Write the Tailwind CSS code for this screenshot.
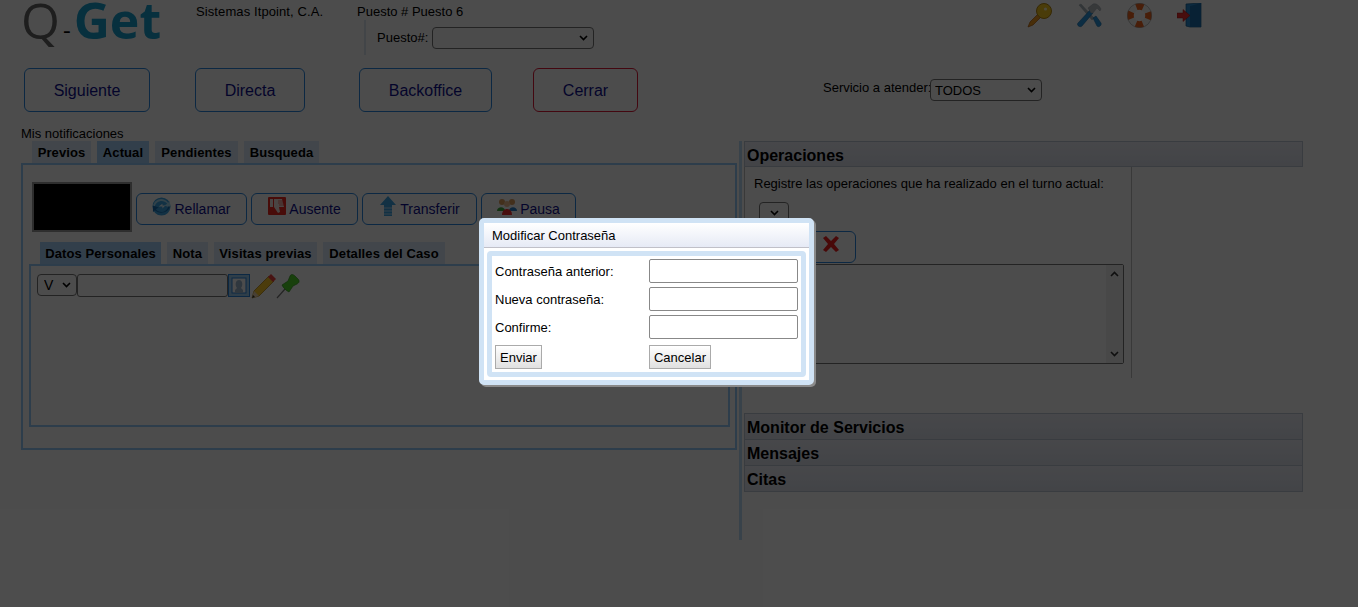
<!DOCTYPE html>
<html lang="es">
<head>
  <meta charset="UTF-8">
  <title>Q-Get</title>
  <script src="https://cdn.jsdelivr.net/npm/@tailwindcss/browser@4"></script>
</head>
<body class="relative h-[607px] w-[1358px] overflow-hidden bg-white font-['Liberation_Sans',Arial,sans-serif] text-[13px] leading-[15px] text-black">

  <!-- Header -->
  <div class="flex h-[68px]">
    <div class="ml-[21px] h-[45px] w-[175px] whitespace-nowrap font-['Open_Sans',sans-serif] text-[50px] leading-[41px]">
      <span class="text-[#666]">Q</span><span class="ml-[3px] mr-[3px] text-[24px] text-black">-</span><span class="text-[50px] font-bold text-[#18a0d0]">Get</span>
    </div>
    <div class="w-[161px] pt-[4px] tracking-[0.1px]">Sistemas Itpoint, C.A.</div>
    <div class="w-[670px] pt-[4px]">
      <div>Puesto # Puesto 6</div>
      <div class="ml-[7px] mt-[1px] flex h-[35px] items-center border-l-2 border-[#dde6f0] pl-[10px]">
        <span class="ml-[1px] w-[55px]">Puesto#:</span>
        <div class="relative">
          <select class="block h-[22px] w-[162px] appearance-none rounded-[4px] border border-[#767676] bg-[#fafafa]"></select>
          <svg class="absolute right-[6px] top-[8px] h-[6px] w-[9px]" viewBox="0 0 9 6"><path d="M1 1l3.5 3.5L8 1" fill="none" stroke="#000" stroke-width="1.6"/></svg>
        </div>
      </div>
    </div>
    <div class="flex gap-[25px] pt-[3px]">
      <svg class="h-[25px] w-[25px]" viewBox="0 0 25 25">
        <path d="M1 24l2-5 9-9 3 3-9 9z" fill="#f09a20" stroke="#b06010" stroke-width=".7"/>
        <circle cx="17" cy="8" r="7.5" fill="#f8c820" stroke="#b5860f"/>
        <circle cx="18.5" cy="6" r="1.6" fill="#fff6c8"/>
      </svg>
      <svg class="h-[25px] w-[25px]" viewBox="0 0 25 25">
        <path d="M2 2l2-1 13 14-2 2z" fill="#a8b4bc" stroke="#8a969e" stroke-width=".4"/>
        <path d="M16 15l3-2 5 7c1 2-2 5-4 3z" fill="#2a98e0" stroke="#17659e" stroke-width=".5"/>
        <path d="M1 20L13 7l3 3L5 23c-2 2-6-1-4-3z" fill="#2a98e0" stroke="#17659e" stroke-width=".5"/>
        <path d="M11 5l5-4c3-1 6 1 8 5l-1 2-3-3-4 5-2 0z" fill="#b8bec4" stroke="#8a969e" stroke-width=".4"/>
      </svg>
      <svg class="h-[25px] w-[25px]" viewBox="0 0 25 25">
        <circle cx="12.5" cy="12.5" r="9" fill="none" stroke="#f4f4f0" stroke-width="6.5"/>
        <circle cx="12.5" cy="12.5" r="9" fill="none" stroke="#f0641e" stroke-width="6.5" stroke-dasharray="7 7.14" stroke-dashoffset="3.5"/>
        <circle cx="12.5" cy="12.5" r="12.2" fill="none" stroke="#999" stroke-width=".6"/>
      </svg>
      <svg class="h-[25px] w-[25px]" viewBox="0 0 25 25">
        <path d="M9 1l15-1v24l-11 0-4-1z" fill="#2a8cd4" stroke="#125a8c" stroke-width=".7"/>
        <path d="M13 3l11-3v24l-11 0z" fill="#1c70b0"/>
        <path d="M0 10h6V6.500l7 6-7 6V15H0z" fill="#f03030" stroke="#a01818" stroke-width=".5"/>
      </svg>
    </div>
  </div>

  <!-- Action buttons -->
  <div class="ml-[24px] flex h-[44px] text-[16px] text-[#101090]">
    <button class="h-full w-[126px] rounded-[6px] border border-[#2a88e0] pt-[1px]">Siguiente</button>
    <button class="ml-[45px] h-full w-[110px] rounded-[6px] border border-[#2a88e0] pt-[1px]">Directa</button>
    <button class="ml-[54px] h-full w-[133px] rounded-[6px] border border-[#2a88e0] pt-[1px]">Backoffice</button>
    <button class="ml-[41px] h-full w-[105px] rounded-[6px] border border-[#e01838] pt-[1px]">Cerrar</button>
    <div class="ml-[185px] flex items-center text-[13px] text-black">
      <span class="mb-[5px] w-[107px] whitespace-nowrap">Servicio a atender:</span>
      <div class="relative">
        <select class="block h-[22px] w-[112px] appearance-none rounded-[4px] border border-[#767676] bg-white pl-[4px]"><option>TODOS</option></select>
        <svg class="absolute right-[6px] top-[8px] h-[6px] w-[9px]" viewBox="0 0 9 6"><path d="M1 1l3.5 3.5L8 1" fill="none" stroke="#000" stroke-width="1.6"/></svg>
      </div>
    </div>
  </div>

  <div class="flex">
    <!-- Left column -->
    <div class="ml-[21px] w-[716px]">
      <div class="mt-[14px] h-[15px] leading-[16px]">Mis notificaciones</div>
      <div class="ml-[11px] flex h-[22px] gap-[6px] font-bold leading-[24px] tracking-[0.1px]">
        <div class="w-[59px] bg-[#dcebfa] text-center">Previos</div>
        <div class="w-[52px] bg-[#a8d4fa] text-center">Actual</div>
        <div class="w-[83px] bg-[#dcebfa] text-center">Pendientes</div>
        <div class="w-[75px] bg-[#dcebfa] text-center">Busqueda</div>
      </div>
      <div class="h-[287px] border-2 border-[#98cdfc] pl-[6px]">
        <div class="mt-[17px] flex h-[50px] items-end">
          <div class="ml-[3px] h-[50px] w-[100px] border-2 border-[#999] bg-black"></div>
          <div class="mb-[7px] ml-[4px] flex h-[32px] gap-[4px] text-[14px] text-[#101090]">
            <button class="flex w-[111px] items-center justify-center gap-[3px] rounded-[6px] border border-[#2a88e0]">
              <svg class="mb-[6px] h-[19px] w-[19px]" viewBox="0 0 20 20"><circle cx="10" cy="10" r="9.500" fill="#3ca4e4"/><path d="M3 10c1-6 9-8 13-3l-3 2 6 2 0-7-2 2C12-1 2 2 1 10z" fill="#a8dcf6"/><path d="M17 10c-1 6-9 8-13 3l3-2-6-2 0 7 2-2c5 5 15 2 16-4z" fill="#1a70b4"/><path d="M7 10l4-3 0 2 3 0-3 3 0-2z" fill="#e8f6fc"/></svg>
              <span>Rellamar</span>
            </button>
            <button class="flex w-[107px] items-center justify-center gap-[3px] rounded-[6px] border border-[#2a88e0]">
              <svg class="mb-[6px] h-[18px] w-[18px]" viewBox="0 0 18 18"><rect width="18" height="18" rx="1" fill="#f02820"/><path d="M2 2h3v8H2zM6 2h8l2 8h-5l1 5-2 1-4-6z" fill="#f8e8e0"/><path d="M10 4h5M10 6h5M11 8h5" stroke="#f02820" stroke-width=".6"/></svg>
              <span>Ausente</span>
            </button>
            <button class="flex w-[115px] items-center justify-center gap-[3px] rounded-[6px] border border-[#2a88e0]">
              <svg class="mb-[6px] h-[20px] w-[18px]" viewBox="0 0 18 20"><path d="M9 0l8 9h-4v11H5V9H1z" fill="#3ca4e4"/><path d="M5 12h8M5 15h8M5 18h8" stroke="#b5dcf5"/></svg>
              <span>Transferir</span>
            </button>
            <button class="flex w-[95px] items-center justify-center gap-[3px] rounded-[6px] border border-[#2a88e0]">
              <svg class="mb-[6px] h-[18px] w-[20px]" viewBox="0 0 20 18"><circle cx="5" cy="5" r="3" fill="#e0a060"/><circle cx="15" cy="5" r="3" fill="#e0a060"/><circle cx="10" cy="7" r="3" fill="#f0c090"/><path d="M0 14c0-5 8-5 8 0z" fill="#3fa83f"/><path d="M12 14c0-5 8-5 8 0z" fill="#2a80c8"/><path d="M5 18c0-8 10-8 10 0z" fill="#f03030"/></svg>
              <span>Pausa</span>
            </button>
          </div>
        </div>
        <div class="ml-[11px] mt-[10px] flex h-[22px] gap-[6px] font-bold leading-[24px] tracking-[0.1px]">
          <div class="w-[121px] bg-[#a8d4fa] text-center">Datos Personales</div>
          <div class="w-[41px] bg-[#dcebfa] text-center">Nota</div>
          <div class="w-[103px] bg-[#dcebfa] text-center">Visitas previas</div>
          <div class="w-[122px] bg-[#dcebfa] text-center">Detalles del Caso</div>
        </div>
        <div class="h-[163px] w-[701px] border-2 border-[#98cdfc] pl-[6px] pt-[8px]">
          <div class="flex h-[24px] items-start">
            <div class="relative">
              <select class="block h-[22px] w-[40px] appearance-none rounded-[4px] border border-[#767676] bg-white pl-[6px] text-[14px]"><option>V</option></select>
              <svg class="absolute right-[6px] top-[8px] h-[6px] w-[9px]" viewBox="0 0 9 6"><path d="M1 1l3.5 3.5L8 1" fill="none" stroke="#000" stroke-width="1.6"/></svg>
            </div>
            <input class="h-[23px] w-[151px] rounded-[3px] border border-[#767676] bg-white">
            <svg class="h-[23px] w-[22px]" viewBox="0 0 22 23"><rect x=".5" y=".5" width="21" height="22" fill="#9fd0f5" stroke="#2a88e0"/><rect x="4" y="4" width="14" height="15" fill="#fff" stroke="#2a88e0"/><path d="M7 19v-3l2-2c-2-2-2-8 2-8s4 6 2 8l2 2v3z" fill="#9fb8d0"/></svg>
            <svg class="ml-[1px] h-[25px] w-[25px]" viewBox="0 0 25 25"><path d="M1 24l2-7L18 2l5 5L8 22z" fill="#ffc828" stroke="#a87a10" stroke-width=".7"/><path d="M17 3l3-3 5 5-3 3z" fill="#f04040"/><path d="M1 24l2-7 5 5z" fill="#f0d8b0"/><path d="M1 24l1-3 2 2z" fill="#333"/></svg>
            <svg class="h-[25px] w-[25px]" viewBox="0 0 25 25"><path d="M1 24l8-9" stroke="#777" stroke-width="1.2"/><path d="M6 11l6-4 2-5c1-2 3-2 5 0l3 3c2 2 1 4-1 5l-4 2-4 6c-2-1-6-4-7-7z" fill="#50d82a" stroke="#2a8a18" stroke-width=".6"/></svg>
          </div>
        </div>
      </div>
    </div>

    <!-- Right column -->
    <div class="ml-[2px] mt-[29px] h-[399px] w-[565px] border-l-[3px] border-[#bcdcf8] pl-[2px]">
      <div class="h-[26px] w-[559px] border border-[#c0c8d8] bg-linear-to-b from-[#eef0f8] to-[#dfe3ee] pl-[2px] text-[16px] font-bold leading-[27px]">Operaciones</div>
      <div class="h-[211px] w-[388px] border-x border-[#c0c0c0] pl-[9px] pt-[9px]">
        <div>Registre las operaciones que ha realizado en el turno actual:</div>
        <div class="relative ml-[5px] mt-[11px] h-[22px] w-[30px]">
          <select class="block h-[22px] w-[30px] appearance-none rounded-[4px] border border-[#767676] bg-white"></select>
          <svg class="absolute right-[10px] top-[8px] h-[6px] w-[9px]" viewBox="0 0 9 6"><path d="M1 1l3.5 3.5L8 1" fill="none" stroke="#000" stroke-width="1.6"/></svg>
        </div>
        <div class="ml-[13px] mt-[7px] flex h-[32px] w-[89px] justify-end rounded-[6px] border border-[#2a88e0] pr-[15px] pt-[3px]">
          <svg class="h-[18px] w-[18px]" viewBox="0 0 18 18"><path d="M1 3l3-2 5 5 5-5 3 2-5 6 5 6-3 2-5-5-5 5-3-2 5-6z" fill="#f02020"/></svg>
        </div>
        <div class="relative mt-[1px] h-[100px] w-[370px]">
          <textarea class="block h-full w-full resize-none rounded-[2px] border border-[#767676] bg-white"></textarea>
          <div class="absolute bottom-[1px] right-[1px] top-[1px] flex w-[17px] flex-col items-center justify-between bg-[#f1f1f1] py-[6px]">
            <svg class="h-[6px] w-[9px]" viewBox="0 0 9 6"><path d="M1 5l3.500-3.500L8 5" fill="none" stroke="#333" stroke-width="1.6"/></svg>
            <svg class="h-[6px] w-[9px]" viewBox="0 0 9 6"><path d="M1 1l3.500 3.500L8 1" fill="none" stroke="#333" stroke-width="1.6"/></svg>
          </div>
        </div>
      </div>
      <div class="mt-[35px] w-[559px] text-[16px] font-bold leading-[28px]">
        <div class="h-[27px] border border-[#c0c8d8] bg-linear-to-b from-[#eef0f8] to-[#dfe3ee] pl-[2px]">Monitor de Servicios</div>
        <div class="h-[26px] border-x border-b border-[#c0c8d8] bg-linear-to-b from-[#eef0f8] to-[#dfe3ee] pl-[2px]">Mensajes</div>
        <div class="h-[26px] border-x border-b border-[#c0c8d8] bg-linear-to-b from-[#eef0f8] to-[#dfe3ee] pl-[2px]">Citas</div>
      </div>
    </div>
  </div>

  <!-- Modal overlay -->
  <div class="absolute inset-0 bg-black/70"></div>

  <!-- Modal -->
  <div class="absolute left-[479px] top-[218px] h-[167px] w-[335px] rounded-[5px] border-[5px] border-[#d0e3f5] bg-white shadow-[2px_2px_0_#8a8a8a]">
    <div class="h-[25px] border-b border-[#c0c0c8] bg-linear-to-b from-white to-[#e6eaf5] pl-[8px] leading-[26px]">Modificar Contraseña</div>
    <div class="mx-[3px] mt-[3px] h-[126px] rounded-[4px] border-[5px] border-[#d0e3f5] pl-[3px] pt-[3px]">
      <div class="grid grid-cols-[154px_149px] grid-rows-[24px_24px_24px_24px] gap-y-[4px]">
        <label class="flex items-center pt-[1px]">Contraseña anterior:</label>
        <input class="rounded-[2px] border border-[#888] bg-white">
        <label class="flex items-center pt-[1px]">Nueva contraseña:</label>
        <input class="rounded-[2px] border border-[#888] bg-white">
        <label class="flex items-center pt-[1px]">Confirme:</label>
        <input class="rounded-[2px] border border-[#888] bg-white">
        <div class="mt-[2px]"><button class="h-[24px] w-[47px] border border-[#aaa] bg-linear-to-b from-white to-[#e0e0e0] pt-[1px]">Enviar</button></div>
        <div class="mt-[2px]"><button class="h-[24px] w-[62px] border border-[#aaa] bg-linear-to-b from-white to-[#e0e0e0] pt-[1px]">Cancelar</button></div>
      </div>
    </div>
  </div>
</body>
</html>
